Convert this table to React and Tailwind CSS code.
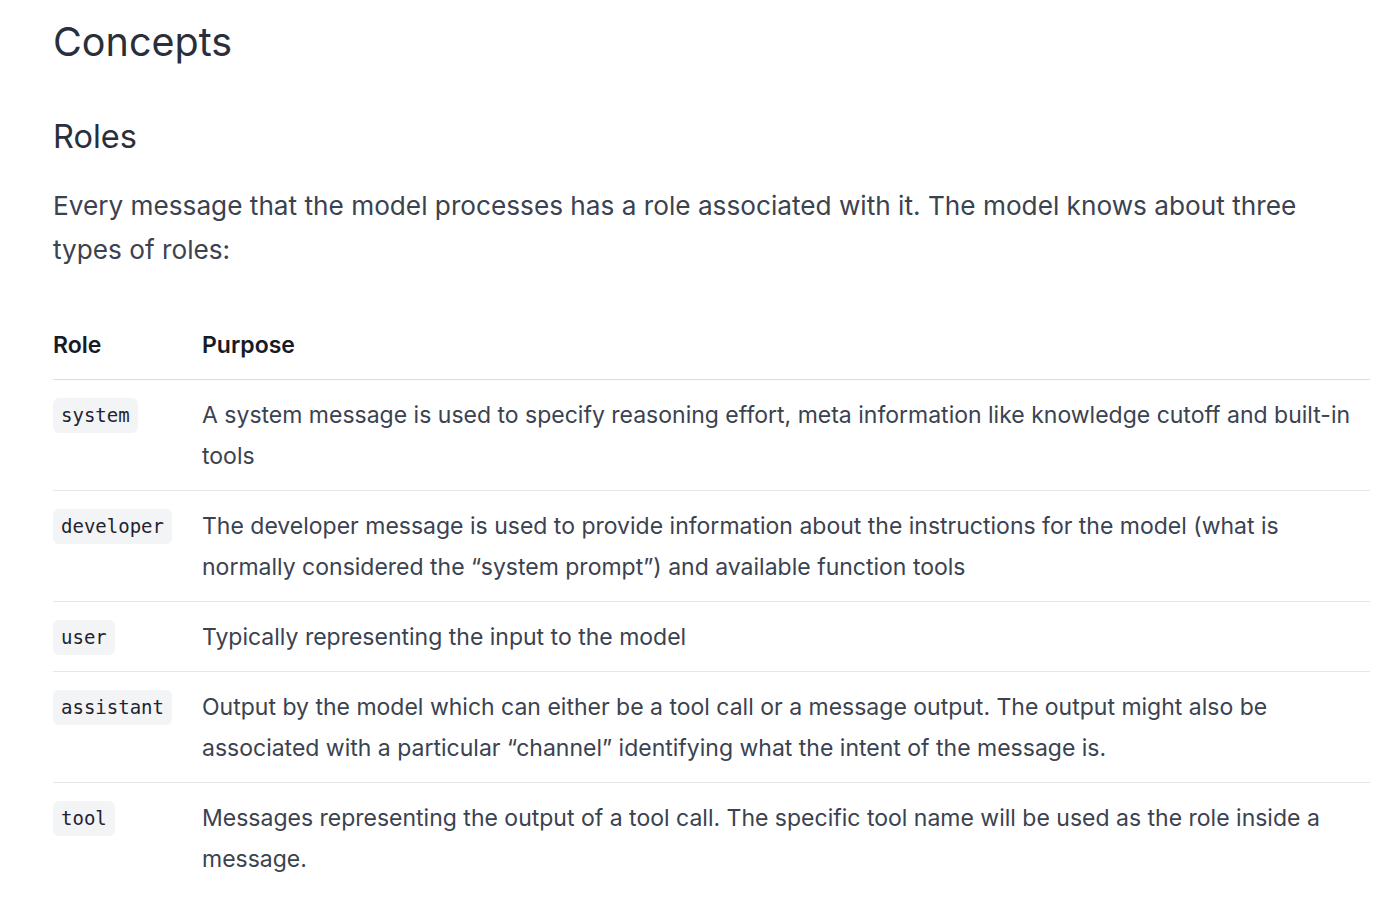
import React from "react";

const roles = [
  {
    role: "system",
    purpose:
      "A system message is used to specify reasoning effort, meta information like knowledge cutoff and built-in tools",
  },
  {
    role: "developer",
    purpose:
      "The developer message is used to provide information about the instructions for the model (what is normally considered the \u201csystem prompt\u201d) and available function tools",
  },
  {
    role: "user",
    purpose: "Typically representing the input to the model",
  },
  {
    role: "assistant",
    purpose:
      "Output by the model which can either be a tool call or a message output. The output might also be associated with a particular \u201cchannel\u201d identifying what the intent of the message is.",
  },
  {
    role: "tool",
    purpose:
      "Messages representing the output of a tool call. The specific tool name will be used as the role inside a message.",
  },
];

const App = () => {
  return (
    <div className="min-h-screen bg-white font-['Inter',sans-serif] text-[#3b4250]">
      <div className="pl-[53px] pr-[30px] pt-[14px]">
        <h1 className="text-[39.5px] leading-[56px] text-[#2a2f3a]">Concepts</h1>
        <h2 className="mt-[46px] text-[32.5px] leading-[42px] text-[#2a2f3a]">Roles</h2>
        <p className="mt-[26px] max-w-[1290px] text-[26.2px] leading-[44px]">
          Every message that the model processes has a role associated with it. The model knows about three
          types of roles:
        </p>

        <table className="mt-[52px] w-full border-collapse text-left">
          <thead>
            <tr className="border-b border-[#d9dde3]">
              <th className="w-[149px] pb-[13px] text-[23px] leading-[42px] font-semibold text-[#161b26]">
                Role
              </th>
              <th className="pb-[13px] text-[23px] leading-[42px] font-semibold text-[#161b26]">
                Purpose
              </th>
            </tr>
          </thead>
          <tbody>
            {roles.map((r, i) => (
              <tr
                key={r.role}
                className={i < roles.length - 1 ? "border-b border-[#e5e7eb]" : ""}
              >
                <td className="py-[14px] align-top">
                  <code className="mt-[4px] inline-block rounded-[6px] bg-[#f3f4f6] px-[8px] font-['DejaVu_Sans_Mono',monospace] text-[19px] leading-[35px] text-[#1f2430]">
                    {r.role}
                  </code>
                </td>
                <td className="pt-[15px] pb-[13px] pr-[10px] align-top text-[23px] leading-[41px]">
                  {r.purpose}
                </td>
              </tr>
            ))}
          </tbody>
        </table>
      </div>
    </div>
  );
};

export default App;
